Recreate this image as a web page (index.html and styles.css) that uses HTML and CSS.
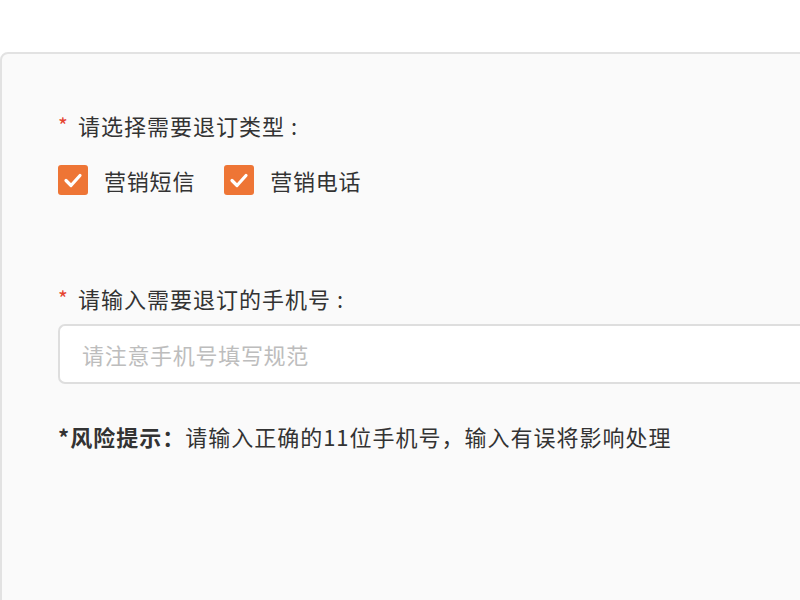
FILE: index.html
```html
<!DOCTYPE html>
<html lang="zh">
<head>
<meta charset="utf-8">
<link rel="stylesheet" href="styles.css">
</head>
<body>
<div class="card">
  <div class="label"><span class="req">*</span>请选择需要退订类型 :</div>
  <div class="checks">
    <label class="check">
      <span class="box"><svg viewBox="0 0 30 30" width="30" height="30"><path d="M8 15.5 L13 20.5 L22 10.5" fill="none" stroke="#fff" stroke-width="3.2" stroke-linecap="round" stroke-linejoin="round"/></svg></span>
      <span class="ctext">营销短信</span>
    </label>
    <label class="check">
      <span class="box"><svg viewBox="0 0 30 30" width="30" height="30"><path d="M8 15.5 L13 20.5 L22 10.5" fill="none" stroke="#fff" stroke-width="3.2" stroke-linecap="round" stroke-linejoin="round"/></svg></span>
      <span class="ctext">营销电话</span>
    </label>
  </div>
  <div class="label label2"><span class="req">*</span>请输入需要退订的手机号 :</div>
  <div class="input"><span class="ph">请注意手机号填写规范</span></div>
  <div class="risk"><b>*风险提示：</b>请输入正确的11位手机号，输入有误将影响处理</div>
</div>
</body>
</html>
```
FILE: styles.css
```css
html, body {
  margin: 0;
  padding: 0;
  overflow: hidden;
  background: #fff;
  height: 600px;
}
body {
  font-family: "Noto Sans CJK SC", "Noto Sans", sans-serif;
  color: #333;
}
.card {
  margin-top: 52px;
  margin-right: -40px;
  height: 700px;
  border: 2px solid #e2e2e2;
  border-radius: 8px;
  background: #fafafa;
  padding: 56px 0 0 56px;
  box-sizing: border-box;
}
.label {
  font-size: 22px;
  letter-spacing: 1px;
  line-height: 30px;
  height: 30px;
  color: #333;
  display: flex;
  align-items: center;
}
.req {
  color: #e5432f;
  font-size: 21px;
  width: 10px;
  margin-right: 10px;
}
.checks {
  display: flex;
  gap: 29px;
  margin-top: 24px;
  height: 31px;
  align-items: center;
}
.check {
  display: flex;
  align-items: center;
}
.box {
  width: 30px;
  height: 30px;
  background: #ee7535;
  border-radius: 3px;
  display: block;
}
.box svg { display: block; }
.ctext {
  font-size: 22px;
  letter-spacing: 0.8px;
  margin-left: 16px;
  color: #333;
}
.label2 {
  margin-top: 88px;
}
.input {
  margin-top: 11px;
  height: 60px;
  border: 2px solid #dedede;
  border-right: none;
  border-radius: 7px 0 0 7px;
  background: #fff;
  box-sizing: border-box;
  display: flex;
  align-items: center;
  padding-left: 22px;
}
.ph {
  font-size: 22px;
  letter-spacing: 0.7px;
  color: #bdbdbd;
}
.risk {
  margin-top: 37px;
  font-size: 22px;
  letter-spacing: 1px;
  line-height: 30px;
  color: #333;
}
.risk b {
  font-weight: 700;
  color: #333;
}
```
